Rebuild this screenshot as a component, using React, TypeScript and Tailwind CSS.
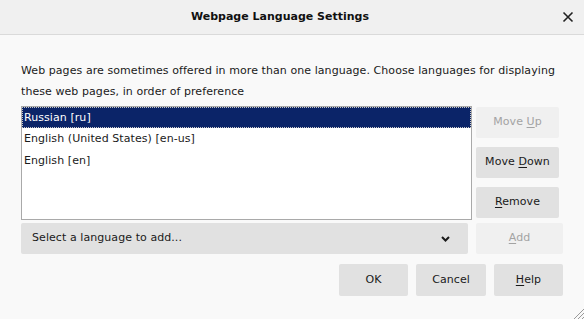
import React from "react";

const U = ({ children }: { children: React.ReactNode }) => (
  <span className="underline underline-offset-2">{children}</span>
);

export default function App() {
  const btn =
    "h-[31px] w-[83px] flex items-center justify-center rounded-[2px] bg-[#e1e1e1] text-[#1a1a1a]";
  const btnDis =
    "h-[31px] flex items-center justify-center rounded-[2px] bg-[#f0f0f0] text-[#a3a3a3]";
  return (
    <div
      className="w-[584px] h-[319px] bg-[#f9f9f9] text-[11px] tracking-[0.07px] text-[#1a1a1a] relative overflow-hidden"
      style={{ fontFamily: '"DejaVu Sans", Tahoma, sans-serif' }}
    >
      <div className="h-[35px] bg-[#f0f0f0] border-b border-[#dadada] flex items-center justify-center relative">
        <span className="font-bold text-[11px] tracking-normal text-[#111] pr-[24px]">Webpage Language Settings</span>
        <svg
          className="absolute right-[10px] top-[11px]"
          width="12"
          height="12"
          viewBox="0 0 12 12"
        >
          <path d="M1.5 1.5 L10.5 10.5 M10.5 1.5 L1.5 10.5" stroke="#222" strokeWidth="1.6" />
        </svg>
      </div>
      <div className="px-[21px]">
        <p className="mt-[25px] leading-[21px]">
          Web pages are sometimes offered in more than one language. Choose languages for displaying
          these web pages, in order of preference
        </p>
        <div className="mt-[4px] flex gap-[4px]">
          <div className="w-[451px] h-[114px] bg-white border border-[#a9a9a9]">
            <div className="h-[21px] bg-[#0b2468] text-white flex items-center pl-[2px] pt-[1px] outline outline-1 outline-dotted outline-[#c8c8c8] -outline-offset-1">
              Russian [ru]
            </div>
            <div className="h-[22px] flex items-center pl-[2px] pt-[1px]">English (United States) [en-us]</div>
            <div className="h-[21px] flex items-center pl-[2px] pt-[1px]">English [en]</div>
          </div>
          <div className="flex flex-col gap-[9px] pt-[1px]">
            <div className={btnDis + " w-[83px]"}>
              <span>
                Move <U>U</U>p
              </span>
            </div>
            <div className={btn}>
              <span>
                Move <U>D</U>own
              </span>
            </div>
            <div className={btn}>
              <span>
                <U>R</U>emove
              </span>
            </div>
          </div>
        </div>
        <div className="mt-[3px] flex gap-[8px]">
          <div className="w-[447px] h-[31px] rounded-[2px] bg-[#e1e1e1] flex items-center justify-between pl-[11px] pr-[18px]">
            <span>Select a language to add...</span>
            <svg width="9" height="6" viewBox="0 0 9 6">
              <path d="M1 1 L4.5 4.5 L8 1" stroke="#1a1a1a" strokeWidth="2" fill="none" />
            </svg>
          </div>
          <div className={btnDis + " w-[87px]"}>
            <span>
              <U>A</U>dd
            </span>
          </div>
        </div>
        <div className="mt-[10px] flex justify-end gap-[8px]">
          <div className="h-[32px] w-[69px] flex items-center justify-center rounded-[2px] bg-[#e1e1e1]">OK</div>
          <div className="h-[32px] w-[70px] flex items-center justify-center rounded-[2px] bg-[#e1e1e1]">Cancel</div>
          <div className="h-[32px] w-[69px] flex items-center justify-center rounded-[2px] bg-[#e1e1e1]">
            <span>
              <U>H</U>elp
            </span>
          </div>
        </div>
      </div>
      <svg className="absolute right-0 bottom-0" width="12" height="12" viewBox="0 0 12 12">
        <path d="M12 2 L2 12 M12 6 L6 12 M12 10 L10 12" stroke="#9a9a9a" strokeWidth="1" />
      </svg>
    </div>
  );
}
